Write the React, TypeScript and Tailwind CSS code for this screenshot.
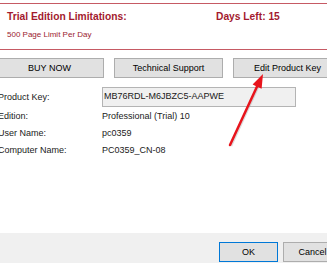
import React from "react";

function Btn({ children, w, blue }: { children: React.ReactNode; w: string; blue?: boolean }) {
  return (
    <div
      className={`${w} h-[20px] shrink-0 flex items-center justify-center bg-[#e1e1e1] border ${
        blue ? "border-[#0078d7]" : "border-[#adadad]"
      } text-[9px] text-black leading-none`}
    >
      {children}
    </div>
  );
}

export default function App() {
  return (
    <div className="relative w-[327px] h-[263px] overflow-hidden bg-white font-['Liberation_Sans',Arial,sans-serif] flex flex-col">
      <div className="ml-[-5px] w-[360px] flex-1 flex flex-col">
        <div className="mt-[3px] h-[47px] border-t border-b border-[#c65a64] pl-[12px] pt-[7px]">
          <div className="flex text-[10.25px] leading-[12px] font-bold text-[#a31a2e]">
            <span className="w-[209px]">Trial Edition Limitations:</span>
            <span>Days Left: 15</span>
          </div>
          <div className="mt-[7px] text-[8px] leading-[10px] text-[#9b1b30]">500 Page Limit Per Day</div>
        </div>

        <div className="mt-[8px] flex gap-[10px]">
          <Btn w="w-[109px]">BUY NOW</Btn>
          <Btn w="w-[109px]">Technical Support</Btn>
          <Btn w="w-[109px]">Edit Product Key</Btn>
        </div>

        <div className="mt-[9px] pl-[3px] grid grid-cols-[104px_1fr] text-[9px] text-[#1a1a1a]">
          <div className="h-[21px] flex items-center">Product Key:</div>
          <div className="h-[21px] flex items-start">
            <div className="w-[194px] h-[20px] border border-[#b4b4b4] bg-[#f0f0f0] pl-[1px] flex items-center">
              MB76RDL-M6JBZC5-AAPWE
            </div>
          </div>
          <div className="h-[17px] flex items-center">Edition:</div>
          <div className="h-[17px] flex items-center">Professional (Trial) 10</div>
          <div className="h-[17px] flex items-center">User Name:</div>
          <div className="h-[17px] flex items-center">pc0359</div>
          <div className="h-[18px] flex items-center">Computer Name:</div>
          <div className="h-[18px] flex items-center">PC0359_CN-08</div>
        </div>
      </div>

      <div className="h-[30px] bg-[#f0f0f0] flex pl-[219px] pt-[9px] gap-[5px]">
        <Btn w="w-[59px]" blue>
          OK
        </Btn>
        <Btn w="w-[59px]">Cancel</Btn>
      </div>

      <svg className="absolute left-0 top-0 pointer-events-none" width="327" height="263" viewBox="0 0 327 263">
        <line x1="231" y1="146" x2="258" y2="87" stroke="#9a9a9a" strokeOpacity="0.35" strokeWidth="2.5" />
        <line x1="230" y1="145" x2="257.5" y2="85.5" stroke="#e8141c" strokeWidth="2.5" strokeLinecap="round" />
        <polygon points="263,74 261.6,88.8 252.6,84.6" fill="#e8141c" />
      </svg>
    </div>
  );
}
